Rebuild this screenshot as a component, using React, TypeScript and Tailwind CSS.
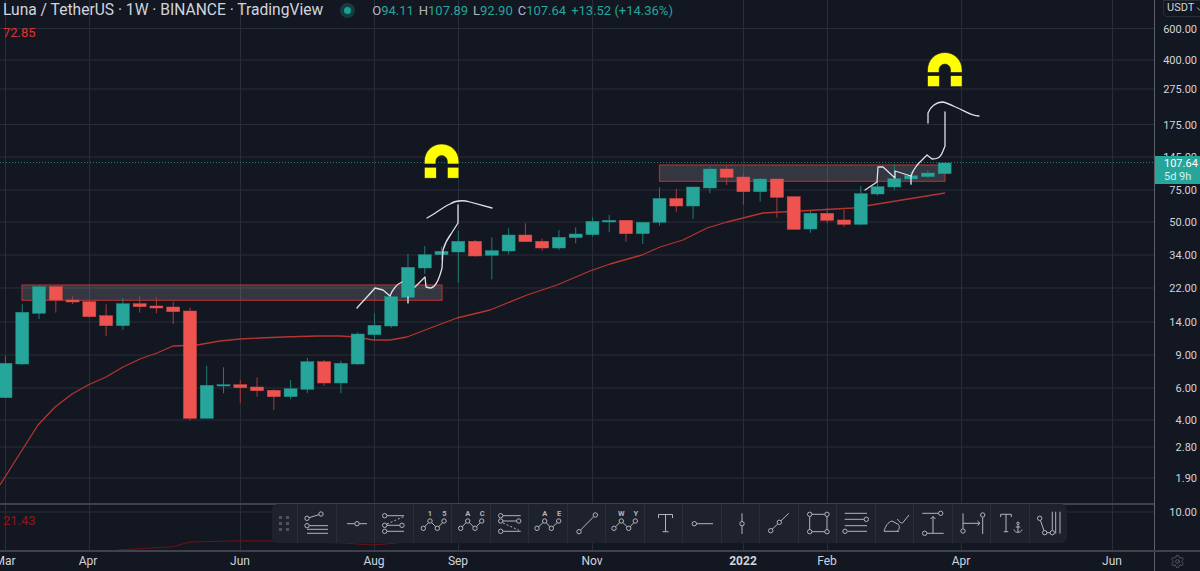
import { Settings, ChevronDown } from 'lucide-react';

const GRID_Y = [28.5, 60, 89, 124.5, 157, 190, 222, 255, 288, 322, 355, 388, 420, 447, 478];
const GRID_X = [5.5, 89.5, 240.5, 374.5, 458.5, 592.5, 743.5, 827.5, 961.5, 1112.5];

// [top wick, body top, body bottom, bottom wick, up?]
const CANDLES: [number, number, number, number, boolean][] = [
  [356, 363.3, 397.7, 398, true], [304.3, 312.3, 364, 365, true], [285, 286.7, 313.3, 319, true],
  [286, 286.7, 300, 312.7, false], [296, 300, 302, 304, false], [301, 301.7, 316.7, 317.5, false],
  [304.3, 315.7, 325.7, 336, false], [298, 303.7, 325.7, 330, true], [296, 303.7, 306.7, 312.7, false],
  [297.3, 306, 308, 313.3, false], [301.7, 307, 311.7, 324, false], [307.7, 311, 418.3, 420.7, false],
  [365.7, 385.3, 418.3, 418.5, true], [367.3, 384.7, 386, 393.3, true], [380, 384.7, 387.7, 403.3, false],
  [377.3, 387, 390.7, 396.7, false], [389.3, 390.3, 396.7, 410, false], [380, 388.7, 396.7, 399, true],
  [358, 361.7, 389.3, 393, true], [360, 361.7, 383, 385.7, false], [360.7, 363.3, 383, 393.3, true],
  [332.3, 334, 364, 365, true], [313.3, 325.3, 334.7, 340, true], [296, 296.7, 326, 327.7, true],
  [254, 267.3, 297.3, 303, true], [246, 254.7, 268, 274, true], [246.7, 251.3, 254.7, 260, true],
  [230.7, 241.3, 252, 282.7, true], [240, 241.3, 256, 256.7, false], [237.3, 250.7, 255.3, 279.3, true],
  [228.3, 235, 251, 254.3, true], [223.3, 235, 241.7, 242, false], [238.7, 241.3, 248, 250.7, false],
  [230, 237.3, 248, 250, true], [227.3, 234, 237.7, 243.3, true], [217.3, 221.3, 234.7, 236.7, true],
  [215, 220.3, 222, 232.3, true], [220, 220.3, 233.7, 241.7, false], [222, 222.3, 233.7, 244, true],
  [187.3, 198.5, 222.3, 225.7, true], [189, 198.5, 206, 211.7, false], [187, 187, 206, 219.3, true],
  [166.7, 169, 188, 193.3, true], [166, 169, 177.3, 185, false], [173.3, 177, 191.7, 204.7, false],
  [178.3, 179, 191.7, 201.7, true], [179, 179, 197.3, 217.7, false], [196.7, 196.7, 229.3, 229.6, false],
  [211, 213.3, 229, 232.7, true], [207.7, 213.3, 220.3, 223.3, false], [210, 220, 224.3, 226.7, false],
  [186, 193.7, 224.3, 225, true], [180, 186.7, 194, 195.7, true], [164, 178.7, 187, 190.3, true],
  [171.7, 175.7, 179, 185, true], [170, 173, 176.7, 177.7, true], [163, 163, 173.7, 174, true],
];

const MA_LINE =
  '0,485 5,477 38,425 55,407 72,394 88,385 106,377 123,367 140,359 157,353 173,346 197,345 220,341 240,339 260,338 283,337 317,336 340,336 357,337 373,340 390,340 407,337 433,327 457,318 490,310 527,295 557,285 590,271 610,264 642,255 660,247 683,240 707,228 727,222 763,213 800,211 853,208 945,193';

const PRICES: [string, number][] = [
  ['600.00', 28.5], ['400.00', 60], ['275.00', 89], ['175.00', 124.5], ['145.00', 157], ['75.00', 190],
  ['50.00', 222], ['34.00', 255], ['22.00', 288], ['14.00', 322], ['9.00', 355], ['6.00', 388],
  ['4.00', 420], ['2.80', 447], ['1.90', 478], ['10.00', 512],
];

const TIMES: [string, number][] = [
  ['Mar', 5], ['Apr', 88], ['Jun', 240], ['Aug', 374], ['Sep', 458], ['Nov', 592],
  ['2022', 743], ['Feb', 827], ['Apr', 961], ['Jun', 1112],
];

function Magnet({ x, y }: { x: number; y: number }) {
  return (
    <g transform={`translate(${x} ${y})`} fill="#ffff00" stroke="#131722" strokeWidth="0.6">
      <path d="M0 20V17.3A17.3 17.3 0 0 1 34.6 17.3V20H23V17.3A5.7 5.7 0 0 0 11.6 17.3V20Z" />
      <rect x="0" y="23.2" width="12" height="11" />
      <rect x="23" y="23.2" width="11.6" height="11" />
    </g>
  );
}

function MainChart() {
  return (
    <svg width="1154" height="503" viewBox="0 0 1154 503" className="block">
      {GRID_Y.map((y) => <line key={y} x1="0" x2="1154" y1={y} y2={y} stroke="#2a2e39" />)}
      {GRID_X.map((x) => <line key={x} x1={x} x2={x} y1="0" y2="503" stroke="#2a2e39" />)}

      <rect x="22" y="285" width="420" height="15.3" fill="#ffffff" fillOpacity="0.14" stroke="#a8302f" strokeWidth="1.2" />
      <rect x="659.5" y="165" width="285.5" height="16.3" fill="#ffffff" fillOpacity="0.14" stroke="#a8302f" strokeWidth="1.2" />

      <polyline points={MA_LINE} fill="none" stroke="#b5352f" strokeWidth="1.3" strokeLinejoin="round" />

      {CANDLES.map(([wt, bt, bb, wb, up], i) => {
        const x = 5.5 + i * 16.77;
        return (
          <g key={i}>
            <line x1={x} x2={x} y1={wt} y2={wb} stroke={up ? '#1b7d74' : '#a83a39'} />
            <rect x={x - 6.5} y={bt} width="13" height={bb - bt} fill={up ? '#26a69a' : '#ef5350'} stroke={up ? '#1f8f85' : '#d64a47'} strokeWidth="0.5" />
          </g>
        );
      })}

      <line x1="0" x2="1154" y1="162.5" y2="162.5" stroke="#26a69a" strokeOpacity="0.7" strokeDasharray="1 2" />

      <g fill="none" stroke="#dfe1e6" strokeWidth="1.3" strokeLinejoin="round" strokeLinecap="round">
        <path d="M357 308C362 302 370 294 375 288L383 290 390 296C392 290 397 284 402 282" />
        <path d="M408 297V303" />
        <path d="M415 287L425 277 426 287 430 288C435 288 439 280 442 268L443 250C445 243 448 238 451 234L458 223V205" />
        <path d="M427 218C435 214 443 207 450 204C455 201 463 200 470 202L492 208" />
        <path d="M865 190L877 182 878 167H883L895 178V171L911 176V184" />
        <path d="M911 176C913 170 915 168 918 164L927 155 932 159C936 159 940 159 943 151L945 146V112" />
        <path d="M928 123V113C930 107 936 102 943 102C948 103 955 107 960 109C966 112 972 116 979 116" />
      </g>

      <Magnet x={424.3} y={144} />
      <Magnet x={927.5} y={52.5} />
    </svg>
  );
}

function LowerPane() {
  return (
    <svg width="1154" height="45" viewBox="0 505 1154 45" className="block">
      <line x1="0" x2="1154" y1="512" y2="512" stroke="#2a2e39" />
      {GRID_X.map((x) => <line key={x} x1={x} x2={x} y1="505" y2="550" stroke="#2a2e39" />)}
      <polyline
        points="117,550 173,546.7 190,542 240,540.7 273,541 343,543 373,545 397,543"
        fill="none"
        stroke="#6e1116"
        strokeWidth="1.1"
      />
    </svg>
  );
}

function Zig({ a, b, pts }: { a: string; b: string; pts: number[] }) {
  const [x0, x1, x2, x3] = pts;
  return (
    <>
      <path d={`M${x0} 24.3L${x1} 17 ${x2} 24.3 ${x3} 17`} />
      {[[x0, 24.3], [x1, 17], [x2, 24.3], [x3, 17]].map(([x, y]) => (
        <circle key={x} cx={x} cy={y} r="2.2" fill="#1e222d" />
      ))}
      <text x={x1} y="12" textAnchor="middle" fontSize="7.5" fontWeight="700" fill="#b2b5be" stroke="none">{a}</text>
      <text x={x3 + 0.5} y="12" textAnchor="middle" fontSize="7.5" fontWeight="700" fill="#b2b5be" stroke="none">{b}</text>
    </>
  );
}

function Dot({ x, y }: { x: number; y: number }) {
  return <circle cx={x} cy={y} r="2.2" fill="#1e222d" />;
}

const TOOLS = [
  <>
    <path d="M9 14.3L23 10M11 21.7H30M9 25.3H30M9 29.3H30" /><Dot x={23} y={10} /><Dot x={9} y={14.3} /><Dot x={9} y={21.7} />
  </>,
  <>
    <path d="M10 19.7H30" /><Dot x={20} y={19.7} />
  </>,
  <>
    <path d="M12 11.7H29M12 21.3H25M12 27.3H29" /><path d="M12 20L29 12.5" strokeDasharray="2 2" />
    <Dot x={9.7} y={11.7} /><Dot x={9.7} y={21.3} /><Dot x={27} y={21.3} /><Dot x={9.7} y={27.3} />
  </>,
  <Zig a="1" b="5" pts={[9.3, 16, 23.3, 30]} />,
  <Zig a="A" b="C" pts={[8.7, 15.7, 23, 29.7]} />,
  <>
    <path d="M12 11.7H29.7M12 17H25M12 27.3H29.7" /><path d="M12 19L28 26.3" strokeDasharray="2 2" />
    <Dot x={9.7} y={11.7} /><Dot x={9.7} y={17} /><Dot x={27.7} y={17} /><Dot x={9.7} y={27.3} />
  </>,
  <Zig a="A" b="E" pts={[8, 15.7, 22.3, 29.7]} />,
  <>
    <path d="M11 27.7L27.3 11" /><Dot x={11} y={27.7} /><Dot x={27.3} y={11} />
  </>,
  <Zig a="W" b="Y" pts={[8, 15.3, 22.7, 29.3]} />,
  <path d="M13.5 14V10.5H27.5V14M20.5 10.5V27.7M17.5 27.7H23.5" />,
  <>
    <path d="M13 19.7H30" /><Dot x={11.3} y={19.7} />
  </>,
  <>
    <path d="M20 9.3V30" /><Dot x={20} y={19.7} />
  </>,
  <>
    <path d="M10.7 26.7L28.7 9.3" /><Dot x={10.7} y={26.7} /><Dot x={19.3} y={18.3} />
  </>,
  <>
    <path d="M10.7 10.3H28V27.7H10.7Z" />
    <Dot x={10.7} y={10.3} /><Dot x={28} y={10.3} /><Dot x={10.7} y={27.7} /><Dot x={28} y={27.7} />
  </>,
  <>
    <path d="M7.7 9.3H30M7.7 15.3H27M7.7 21.7H30M10.5 27.3H30" /><Dot x={29.3} y={15.3} /><Dot x={8} y={27.3} />
  </>,
  <>
    <path d="M8 27.3H23M8 27.3C9.5 22 12 18 16 17L22.5 20.5C24 23 23.5 25.5 21 27.3" />
    <path d="M21.3 15C23 18 25.5 19.5 26.5 19L33 11" />
  </>,
  <>
    <path d="M8.3 9.3H24M13 29.3H29.7M19 29.3V12.5M16.5 15L19 12.5 21.5 15" /><Dot x={26.7} y={9.3} /><Dot x={10.7} y={29.3} />
  </>,
  <>
    <path d="M10 9.3V24.5M10 19.3H27M24.5 17L27 19.3 24.5 21.5M29.7 13.5V30" /><Dot x={10} y={27} /><Dot x={29.7} y={11} />
  </>,
  <>
    <path d="M9.7 13V10.3H20.3V13M15 10.3V27.7M12.8 27.7H17.2" />
    <path d="M27 20.5V28.3M24.8 23H29.2M23 25.5C23.5 27.5 25 28.3 27 28.3S30.5 27.5 31 25.5" /><circle cx="27" cy="19.3" r="1.2" />
  </>,
  <>
    <path d="M9.7 14.3L14.7 28.7H22.3M22.3 7.7V26M25.7 7.7V29.5M30 7.7V29.5" />
    <Dot x={9.7} y={14.3} /><Dot x={14.7} y={28.7} /><Dot x={22.3} y={28.7} />
  </>,
];

function DrawingToolbar() {
  return (
    <div className="absolute left-[272px] top-[504px] flex h-[39px] w-[795px] rounded-md bg-[#1e222d]">
      <div className="grid w-[25px] grid-cols-2 content-center justify-center gap-x-[3.5px] gap-y-[3.5px] px-[7px]">
        {[0, 1, 2, 3, 4, 5].map((i) => <span key={i} className="h-[2.5px] w-[2.5px] bg-[#50535e]" />)}
      </div>
      {TOOLS.map((icon, i) => (
        <div key={i} className="h-[39px] w-[38.5px] border-l border-[#2a2e39]">
          <svg width="38" height="39" viewBox="0 0 38 39" fill="none" stroke="#b2b5be" strokeWidth="1" className="block">
            {icon}
          </svg>
        </div>
      ))}
    </div>
  );
}

function Legend() {
  return (
    <div className="absolute left-[3px] top-0 flex h-[21px] items-center whitespace-nowrap text-[#26a69a]">
      <span className="text-[15.6px] text-[#d1d4dc]">Luna / TetherUS · 1W · BINANCE · TradingView</span>
      <span className="ml-[17px] flex h-[15px] w-[15px] items-center justify-center rounded-full bg-[#26a69a]/25">
        <span className="h-[7px] w-[7px] rounded-full bg-[#12a594]" />
      </span>
      <div className="ml-[17px] flex gap-[5px] text-[13px]">
        <span><span className="text-[#b2b5be]">O</span>94.11</span>
        <span><span className="text-[#b2b5be]">H</span>107.89</span>
        <span><span className="text-[#b2b5be]">L</span>92.90</span>
        <span><span className="text-[#b2b5be]">C</span>107.64</span>
        <span>+13.52 (+14.36%)</span>
      </div>
    </div>
  );
}

function PriceAxis() {
  return (
    <div className="relative w-[46px] border-l border-[#5d606b] bg-[#131722] text-[11px] text-[#d1d4dc]">
      <div className="absolute -right-[6px] top-0 flex h-[17px] w-[43px] items-center rounded-bl border border-[#2a2e39] pl-[3px] text-[11px]">
        USDT<ChevronDown size={10} className="ml-[1px]" />
      </div>
      {PRICES.map(([label, y]) => (
        <span key={label} className="absolute right-[3px] -translate-y-1/2 leading-none" style={{ top: y }}>{label}</span>
      ))}
      <div className="absolute left-0 top-[156px] flex h-[28px] w-[46px] flex-col justify-center bg-[#26a69a] pl-[9px] text-[11px] leading-[13px]">
        <span className="text-white">107.64</span>
        <span className="text-[#d7f0ed]">5d 9h</span>
      </div>
    </div>
  );
}

function TimeAxis() {
  return (
    <div className="flex h-[19px]">
      <div className="relative w-[1154px] overflow-hidden text-[12px] text-[#d1d4dc]">
        {TIMES.map(([label, x]) => (
          <span
            key={`${label}${x}`}
            className={`absolute top-[3px] -translate-x-1/2 leading-none ${label === '2022' ? 'font-bold' : ''}`}
            style={{ left: x }}
          >
            {label}
          </span>
        ))}
      </div>
      <div className="flex w-[46px] items-center justify-center border-l border-[#5d606b] text-[#787b86]">
        <Settings size={15} strokeWidth={1} />
      </div>
    </div>
  );
}

export default function App() {
  return (
    <div className="relative h-[571px] w-[1200px] overflow-hidden bg-[#131722] font-['Roboto',sans-serif]">
      <div className="flex h-[552px] border-b-2 border-[#3f424d]">
        <div className="w-[1154px]">
          <MainChart />
          <div className="h-[2px] bg-[#3f424d]" />
          <LowerPane />
        </div>
        <PriceAxis />
      </div>
      <TimeAxis />
      <Legend />
      <span className="absolute left-[3px] top-[26px] text-[13px] leading-[14px] text-[#e0352f]">72.85</span>
      <span className="absolute left-[3px] top-[514px] text-[13px] leading-[14px] text-[#8b1a1c]">21.43</span>
      <DrawingToolbar />
    </div>
  );
}
